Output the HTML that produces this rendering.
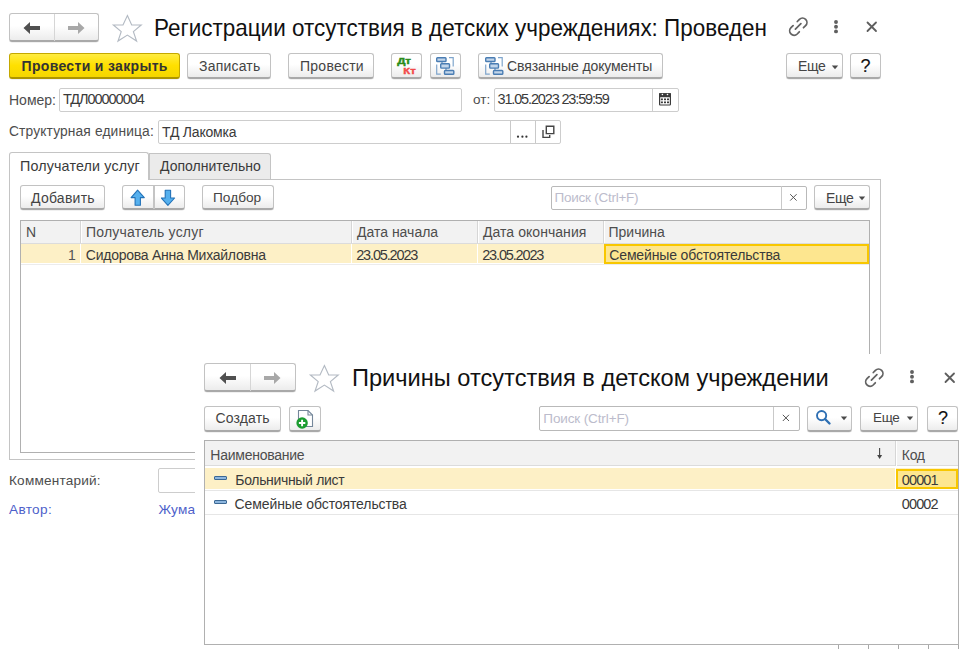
<!DOCTYPE html>
<html><head><meta charset="utf-8">
<style>
*{box-sizing:border-box;margin:0;padding:0}
html,body{width:966px;height:655px;overflow:hidden;background:#fff;font-family:"Liberation Sans",sans-serif;font-size:14px;color:#3a3a3a}
.a{position:absolute}
.t{position:absolute;white-space:nowrap;line-height:1}
.btn{position:absolute;border:1px solid #c2c2c2;border-bottom:2px solid #a9a9a9;border-radius:3px;background:linear-gradient(#fff 0%,#fff 45%,#ececec 100%);box-shadow:0 0.5px 0.5px rgba(0,0,0,.12)}
.yb{position:absolute;border:1px solid #c4a800;border-bottom:2px solid #ad9500;border-radius:3px;background:linear-gradient(#ffec40,#ffe000 50%,#f5d600);box-shadow:0 0.5px 0.5px rgba(0,0,0,.12)}
.inp{position:absolute;border:1px solid #cdcdcd;border-radius:2px;background:#fff}
.lbl{color:#4d4d4d}
.vl{position:absolute;width:1px}
.hd{position:absolute;width:2px;border-left:1px solid #d6d6d6;background:#fff}
.hl{position:absolute;height:1px}
</style></head><body>

<!-- ===== MAIN FORM ===== -->
<!-- nav -->
<div class="btn" style="left:9px;top:13px;width:90px;height:29px"></div>
<div class="vl" style="left:54px;top:14px;height:27px;background:#d6d6d6"></div>
<svg class="a" style="left:23px;top:21px" width="18" height="14" viewBox="0 0 18 14"><path d="M0.5 7 L7 1 L7 5 L17 5 L17 9 L7 9 L7 13 Z" fill="#505050"/></svg>
<svg class="a" style="left:67px;top:21px" width="18" height="14" viewBox="0 0 18 14"><path d="M17.5 7 L11 1 L11 5 L1 5 L1 9 L11 9 L11 13 Z" fill="#a8a8a8"/></svg>
<!-- star -->
<svg class="a" style="left:108px;top:10.5px" width="40" height="34" viewBox="0 0 40 34"><path d="M19.4 4.6 L23.7 14 L33.2 14 L25.4 20.6 L28.6 30.1 L19.4 24.1 L10 30.1 L13.2 20.6 L5.4 14 L15 14 Z" fill="none" stroke="#b3bac3" stroke-width="1.15" stroke-linejoin="miter"/></svg>
<div class="t" style="left:154px;top:16.5px;font-size:23.6px;transform:scaleX(0.952);transform-origin:0 0;color:#111">Регистрации отсутствия в детских учреждениях: Проведен</div>
<!-- link/dots/close -->
<svg class="a" style="left:784px;top:12px" width="28" height="28" viewBox="0 0 28 28"><g fill="none" stroke="#636363" stroke-width="1.75" stroke-linecap="round"><path d="M13.3 9.5 L15.4 7.3 A4.4 4.4 0 0 1 21.6 13.6 L19.5 15.7"/><path d="M15.3 19.8 L13.2 22 A4.4 4.4 0 0 1 7 15.7 L9.1 13.6"/><path d="M11.4 17.1 L16.9 11.7"/></g></svg>
<svg class="a" style="left:831.6px;top:18.8px" width="8" height="16" viewBox="0 0 8 16"><g fill="#606060"><circle cx="4" cy="3" r="1.95"/><circle cx="4" cy="7.7" r="1.95"/><circle cx="4" cy="12.4" r="1.95"/></g></svg>
<svg class="a" style="left:866.3px;top:21.2px" width="12" height="12" viewBox="0 0 12 12"><path d="M1.5 1.5 L10 10 M10 1.5 L1.5 10" stroke="#5e5e5e" stroke-width="1.8" stroke-linecap="round"/></svg>

<!-- toolbar -->
<div class="yb" style="left:9px;top:53px;width:171px;height:26px"></div>
<div class="t" style="left:21.5px;top:59px;font-weight:bold;font-size:14px;letter-spacing:0.33px;color:#333">Провести и закрыть</div>
<div class="btn" style="left:187px;top:53px;width:84px;height:26px"></div>
<div class="t" style="left:199px;top:59px;letter-spacing:0.2px;color:#444">Записать</div>
<div class="btn" style="left:288px;top:53px;width:86px;height:26px"></div>
<div class="t" style="left:300px;top:59px;letter-spacing:0.25px;color:#444">Провести</div>
<div class="btn" style="left:391px;top:53px;width:31px;height:26px"></div>
<svg class="a" style="left:391px;top:53px" width="31" height="26" viewBox="391 53 31 26"><text x="397.2" y="64" font-family="Liberation Sans" font-weight="bold" font-size="9.4" fill="#2b8c18" stroke="#2b8c18" stroke-width="0.5" textLength="13.8" lengthAdjust="spacingAndGlyphs">Дт</text><text x="403.3" y="74.1" font-family="Liberation Sans" font-weight="bold" font-size="9.6" fill="#f24a4a" stroke="#f24a4a" stroke-width="0.4" textLength="12.4" lengthAdjust="spacingAndGlyphs">Кт</text></svg>
<div class="btn" style="left:430px;top:53px;width:31px;height:26px"></div>
<svg class="a" style="left:435.3px;top:56.2px" width="20" height="20" viewBox="-1 -1 20 20"><g fill="#c3d6ea" stroke="#4a7db3" stroke-width="1.4"><rect x="0.7" y="0.7" width="9.3" height="3.8" rx="0.8"/><rect x="4.7" y="6.7" width="8.8" height="4.4" rx="0.8"/><rect x="8.5" y="13.5" width="9.3" height="3.8" rx="0.8"/></g><path d="M6 4.5 V6.7 M10 11.1 V13.5" stroke="#4a7db3" stroke-width="1"/><path d="M13 0.6 H17.2 V9.4 M0.7 7.6 V17.2 H4.8" fill="none" stroke="#7fa5cc" stroke-width="1.2"/></svg>
<div class="btn" style="left:478px;top:53px;width:185px;height:26px"></div>
<svg class="a" style="left:483.6px;top:56.2px" width="20" height="20" viewBox="-1 -1 20 20"><g fill="#c3d6ea" stroke="#4a7db3" stroke-width="1.4"><rect x="0.7" y="0.7" width="9.3" height="3.8" rx="0.8"/><rect x="4.7" y="6.7" width="8.8" height="4.4" rx="0.8"/><rect x="8.5" y="13.5" width="9.3" height="3.8" rx="0.8"/></g><path d="M6 4.5 V6.7 M10 11.1 V13.5" stroke="#4a7db3" stroke-width="1"/><path d="M13 0.6 H17.2 V9.4 M0.7 7.6 V17.2 H4.8" fill="none" stroke="#7fa5cc" stroke-width="1.2"/></svg>
<div class="t" style="left:507px;top:59px;letter-spacing:-0.1px;color:#444">Связанные документы</div>
<div class="btn" style="left:786px;top:53px;width:57px;height:26px"></div>
<div class="t" style="left:798px;top:59px;letter-spacing:-0.4px;color:#444">Еще</div>
<svg class="a" style="left:831px;top:65px" width="8" height="5" viewBox="0 0 8 5"><path d="M0.8 0.6 H7.2 L4 4.2 Z" fill="#4a4a4a"/></svg>
<div class="btn" style="left:850px;top:53px;width:31px;height:26px"></div>
<div class="t" style="left:860.5px;top:57px;font-size:18px;color:#111;-webkit-text-stroke:0.15px #111">?</div>

<!-- fields -->
<div class="t lbl" style="left:9px;top:92.7px;font-size:14px">Номер:</div>
<div class="inp" style="left:59px;top:88px;width:403px;height:24px"></div>
<div class="t" style="left:63px;top:92px;font-size:14.5px;letter-spacing:-1.05px">ТДЛ00000004</div>
<div class="t lbl" style="left:473px;top:93px;font-size:13.5px">от:</div>
<div class="inp" style="left:494px;top:88px;width:185px;height:24px"></div>
<div class="vl" style="left:652px;top:89px;height:22px;background:#cdcdcd"></div>
<div class="t" style="left:497.5px;top:92px;font-size:14.5px;letter-spacing:-1.15px">31.05.2023 23:59:59</div>
<svg class="a" style="left:658px;top:91px" width="14" height="15" viewBox="0 0 14 15"><path d="M1.6 2.8 H12.4 V13.3 Q12.4 14 11.7 14 H2.3 Q1.6 14 1.6 13.3 Z" fill="#fff" stroke="#3a3a3a" stroke-width="1.2"/><rect x="1" y="2.2" width="12" height="4" rx="1" fill="#3a3a3a"/><circle cx="4.4" cy="3.5" r="0.8" fill="#fff"/><circle cx="9.5" cy="3.5" r="0.8" fill="#fff"/><g fill="#3a3a3a"><rect x="2.9" y="7.5" width="2" height="1.7"/><rect x="6" y="7.5" width="2" height="1.7"/><rect x="9" y="7.5" width="2" height="1.7"/><rect x="2.9" y="10.5" width="2" height="1.7"/><rect x="6" y="10.5" width="2" height="1.7"/><rect x="9" y="10.5" width="2" height="1.7"/></g></svg>

<div class="t lbl" style="left:9px;top:125px;font-size:13.8px;letter-spacing:0.13px">Структурная единица:</div>
<div class="inp" style="left:158px;top:120px;width:403px;height:24px"></div>
<div class="vl" style="left:510px;top:121px;height:22px;background:#c9c9c9"></div>
<div class="vl" style="left:535px;top:121px;height:22px;background:#c9c9c9"></div>
<div class="t" style="left:162px;top:125px;letter-spacing:-0.2px">ТД Лакомка</div>
<svg class="a" style="left:516px;top:134px" width="12" height="5" viewBox="0 0 12 5"><g fill="#333"><circle cx="2" cy="2.7" r="1.1"/><circle cx="6.4" cy="2.7" r="1.1"/><circle cx="10.4" cy="2.7" r="1.1"/></g></svg>
<svg class="a" style="left:540px;top:124px" width="16" height="16" viewBox="0 0 16 16"><path d="M6.3 2.2 H13.8 V9.6 H6.3 Z" fill="none" stroke="#444" stroke-width="1.4"/><path d="M3 5.9 V13.4 H9.7 V10.9" fill="none" stroke="#444" stroke-width="1.4"/></svg>

<!-- tabs -->
<div class="a" style="left:9px;top:179px;width:872px;height:281px;border:1px solid #c4c4c4;"></div>
<div class="a" style="left:9px;top:152px;width:140px;height:28px;border:1px solid #c4c4c4;border-bottom:none;background:#fff;border-radius:3px 3px 0 0"></div>
<div class="a" style="left:149px;top:153px;width:122px;height:26px;border:1px solid #c4c4c4;border-bottom:none;background:#ebebeb;border-radius:0 3px 0 0"></div>
<div class="t" style="left:20px;top:158.5px;font-size:14.3px;letter-spacing:0.15px">Получатели услуг</div>
<div class="t" style="left:160px;top:159px">Дополнительно</div>

<div class="btn" style="left:20px;top:185px;width:85px;height:25px"></div>
<div class="t" style="left:31px;top:190.5px;letter-spacing:0.25px;color:#444">Добавить</div>
<div class="btn" style="left:122px;top:185px;width:63px;height:25px"></div>
<div class="vl" style="left:153px;top:186px;height:23px;width:1.5px;background:#c4c4c4"></div>
<svg class="a" style="left:130px;top:188px" width="16" height="19" viewBox="0 0 16 19"><path d="M7.6 2.2 L14.3 9.6 L10.4 9.6 L10.4 17.2 L5.1 17.2 L5.1 9.6 L1.1 9.6 Z" fill="#55b0ee" stroke="#2272b8" stroke-width="1.1" stroke-linejoin="round"/></svg>
<svg class="a" style="left:161px;top:188px" width="16" height="19" viewBox="0 0 16 19"><path d="M4.2 2.3 H9.6 V10 H13.6 L6.9 17.3 L0.4 10 H4.2 Z" fill="#55b0ee" stroke="#2272b8" stroke-width="1.1" stroke-linejoin="round"/></svg>
<div class="btn" style="left:202px;top:185px;width:72px;height:25px"></div>
<div class="t" style="left:213px;top:190.5px;font-size:13.7px;color:#444">Подбор</div>

<div class="inp" style="left:551px;top:186px;width:256px;height:24px;border-color:#b9b9b9"></div>
<div class="vl" style="left:781px;top:186px;height:23px;background:#c9c9c9"></div>
<div class="t" style="left:554.5px;top:190.5px;font-size:13.5px;letter-spacing:-0.25px;color:#bcbccc">Поиск (Ctrl+F)</div>
<svg class="a" style="left:789px;top:193px" width="9" height="9" viewBox="0 0 9 9"><path d="M1.2 1.2 L7.6 7.6 M7.6 1.2 L1.2 7.6" stroke="#555" stroke-width="1"/></svg>
<div class="btn" style="left:814px;top:185px;width:56px;height:25px"></div>
<div class="t" style="left:826px;top:190.5px;letter-spacing:-0.4px;color:#444">Еще</div>
<svg class="a" style="left:858px;top:196px" width="8" height="5" viewBox="0 0 8 5"><path d="M0.8 0.6 H7.2 L4 4.2 Z" fill="#4a4a4a"/></svg>

<!-- table -->
<div class="a" style="left:20px;top:220px;width:850px;height:233px;border:1px solid #b0b0b0"></div>
<div class="a" style="left:21px;top:221px;width:848px;height:23px;background:#f2f2f2;border-bottom:1px solid #dcdcdc"></div>
<div class="hd" style="left:80px;top:221px;height:22px"></div>
<div class="hd" style="left:351px;top:221px;height:22px"></div>
<div class="hd" style="left:477px;top:221px;height:22px"></div>
<div class="hd" style="left:603px;top:221px;height:22px"></div>
<div class="t" style="left:26px;top:225px;font-size:14px;color:#4d4d4d">N</div>
<div class="t" style="left:86px;top:225px;font-size:14px;letter-spacing:0.2px;color:#4d4d4d">Получатель услуг</div>
<div class="t" style="left:357px;top:225px;font-size:14px;color:#4d4d4d">Дата начала</div>
<div class="t" style="left:483px;top:225px;font-size:14px;letter-spacing:0.05px;color:#4d4d4d">Дата окончания</div>
<div class="t" style="left:608.5px;top:225px;font-size:14px;color:#4d4d4d">Причина</div>
<div class="a" style="left:21px;top:244px;width:848px;height:19px;background:#fdf0c6"></div>
<div class="vl" style="left:80px;top:244px;height:19px;background:#fff"></div>
<div class="vl" style="left:351px;top:244px;height:19px;background:#fff"></div>
<div class="vl" style="left:477px;top:244px;height:19px;background:#fff"></div>
<div class="hl" style="left:21px;top:264px;width:848px;background:#ececec"></div>
<div class="a" style="left:604px;top:244px;width:265px;height:19.5px;background:#fde68f;border:2px solid #f8c700"></div>
<div class="t" style="left:68px;top:248.3px;font-size:14px;color:#555">1</div>
<div class="t" style="left:85.8px;top:248.3px;font-size:14px;letter-spacing:-0.25px">Сидорова Анна Михайловна</div>
<div class="t" style="left:356.2px;top:248px;font-size:14.5px;letter-spacing:-1.15px">23.05.2023</div>
<div class="t" style="left:482.2px;top:248px;font-size:14.5px;letter-spacing:-1.15px">23.05.2023</div>
<div class="t" style="left:609.3px;top:248.3px;font-size:14px;letter-spacing:-0.15px">Семейные обстоятельства</div>

<!-- comment / author -->
<div class="t lbl" style="left:9px;top:474px;font-size:13.6px;letter-spacing:0.2px">Комментарий:</div>
<div class="inp" style="left:158px;top:468px;width:100px;height:25px"></div>
<div class="t" style="left:9px;top:503px;font-size:13.6px;letter-spacing:0.35px;color:#4e5fca">Автор:</div>
<div class="t" style="left:158.5px;top:503px;font-size:13.6px;letter-spacing:0.2px;color:#4e5fca">Жумабаева</div>

<!-- ===== POPUP ===== -->
<div class="a" style="left:195px;top:354px;width:771px;height:301px;background:#fff"></div>
<div class="btn" style="left:204px;top:363px;width:92px;height:29px"></div>
<div class="vl" style="left:250px;top:364px;height:27px;background:#d6d6d6"></div>
<svg class="a" style="left:219px;top:371px" width="18" height="14" viewBox="0 0 18 14"><path d="M0.5 7 L7 1 L7 5 L17 5 L17 9 L7 9 L7 13 Z" fill="#505050"/></svg>
<svg class="a" style="left:263px;top:371px" width="18" height="14" viewBox="0 0 18 14"><path d="M17.5 7 L11 1 L11 5 L1 5 L1 9 L11 9 L11 13 Z" fill="#a8a8a8"/></svg>
<svg class="a" style="left:305.1px;top:360.8px" width="40" height="34" viewBox="0 0 40 34"><path d="M19.4 4.6 L23.7 14 L33.2 14 L25.4 20.6 L28.6 30.1 L19.4 24.1 L10 30.1 L13.2 20.6 L5.4 14 L15 14 Z" fill="none" stroke="#b3bac3" stroke-width="1.15" stroke-linejoin="miter"/></svg>
<div class="t" style="left:352px;top:366px;font-size:24.4px;transform:scaleX(0.968);transform-origin:0 0;color:#111">Причины отсутствия в детском учреждении</div>
<svg class="a" style="left:860.4px;top:362.5px" width="28" height="28" viewBox="0 0 28 28"><g fill="none" stroke="#636363" stroke-width="1.75" stroke-linecap="round"><path d="M13.3 9.5 L15.4 7.3 A4.4 4.4 0 0 1 21.6 13.6 L19.5 15.7"/><path d="M15.3 19.8 L13.2 22 A4.4 4.4 0 0 1 7 15.7 L9.1 13.6"/><path d="M11.4 17.1 L16.9 11.7"/></g></svg>
<svg class="a" style="left:907.8px;top:368.8px" width="8" height="16" viewBox="0 0 8 16"><g fill="#606060"><circle cx="4" cy="3" r="1.95"/><circle cx="4" cy="7.7" r="1.95"/><circle cx="4" cy="12.4" r="1.95"/></g></svg>
<svg class="a" style="left:943.6px;top:371.5px" width="12" height="12" viewBox="0 0 12 12"><path d="M1.5 1.5 L10 10 M10 1.5 L1.5 10" stroke="#5e5e5e" stroke-width="1.8" stroke-linecap="round"/></svg>

<div class="btn" style="left:204px;top:405.5px;width:77px;height:26px"></div>
<div class="t" style="left:215.5px;top:411px;font-size:14px;letter-spacing:0.15px;color:#444">Создать</div>
<div class="btn" style="left:289px;top:405.5px;width:32px;height:26px"></div>
<svg class="a" style="left:295px;top:409px" width="20" height="20" viewBox="0 0 20 20"><path d="M3.5 1.5 H13 L17.5 6 V17.5 H3.5 Z" fill="#fff" stroke="#75879a" stroke-width="1.1"/><path d="M13 1.5 V6 H17.5" fill="none" stroke="#75879a" stroke-width="1.1"/><circle cx="7.1" cy="14" r="5.7" fill="#1b9c30"/><path d="M7.1 10.8 V17.2 M3.9 14 H10.3" stroke="#fff" stroke-width="1.9"/></svg>

<div class="inp" style="left:539px;top:406px;width:261px;height:25px;border-color:#b9b9b9"></div>
<div class="vl" style="left:773px;top:407px;height:23px;background:#c9c9c9"></div>
<div class="t" style="left:543.3px;top:411.5px;font-size:13.5px;letter-spacing:-0.12px;color:#bcbccc">Поиск (Ctrl+F)</div>
<svg class="a" style="left:782px;top:414px" width="8" height="8" viewBox="0 0 8 8"><path d="M0.8 0.8 L7 7 M7 0.8 L0.8 7" stroke="#555" stroke-width="1"/></svg>
<div class="btn" style="left:807px;top:405.5px;width:45px;height:26px"></div>
<svg class="a" style="left:815px;top:409px" width="17" height="17" viewBox="0 0 17 17"><circle cx="6.6" cy="6.6" r="4.6" fill="none" stroke="#2e6fb3" stroke-width="1.9"/><path d="M10 10 L14.5 14.5" stroke="#2e6fb3" stroke-width="2.4" stroke-linecap="round"/></svg>
<svg class="a" style="left:839.5px;top:416px" width="8" height="5" viewBox="0 0 8 5"><path d="M0.8 0.6 H7.2 L4 4.2 Z" fill="#4a4a4a"/></svg>
<div class="btn" style="left:860px;top:405.5px;width:58px;height:26px"></div>
<div class="t" style="left:873px;top:411px;font-size:13.5px;letter-spacing:-0.3px;color:#444">Еще</div>
<svg class="a" style="left:905.5px;top:416px" width="8" height="5" viewBox="0 0 8 5"><path d="M0.8 0.6 H7.2 L4 4.2 Z" fill="#4a4a4a"/></svg>
<div class="btn" style="left:927px;top:405.5px;width:31px;height:26px"></div>
<div class="t" style="left:938px;top:409px;font-size:18px;color:#111;-webkit-text-stroke:0.15px #111">?</div>

<div class="a" style="left:204px;top:440px;width:755px;height:205px;border:1px solid #b0b0b0"></div>
<div class="a" style="left:205px;top:441px;width:753px;height:25px;background:#f2f2f2;border-bottom:1px solid #dcdcdc"></div>
<div class="hd" style="left:895px;top:441px;height:25px"></div>
<div class="t" style="left:210.3px;top:447.5px;font-size:14px;letter-spacing:-0.25px;color:#4d4d4d">Наименование</div>
<svg class="a" style="left:875px;top:447px" width="10" height="14" viewBox="0 0 10 14"><path d="M4.6 1 V9" stroke="#444" stroke-width="1.1"/><path d="M2.1 8 H7.1 L4.6 12 Z" fill="#444"/></svg>
<div class="t" style="left:901.8px;top:447.5px;font-size:14px;letter-spacing:-0.3px;color:#4d4d4d">Код</div>
<div class="a" style="left:205px;top:468px;width:753px;height:21px;background:#fdf0c6"></div>
<div class="vl" style="left:895px;top:468px;height:21px;background:#fff"></div>
<div class="a" style="left:896px;top:469px;width:62px;height:20px;background:#fde68f;border:2px solid #f8c700"></div>
<div class="hl" style="left:205px;top:490px;width:753px;background:#e6e6e6"></div>
<div class="hl" style="left:205px;top:514px;width:753px;background:#e6e6e6"></div>
<div class="a" style="left:214px;top:475.5px;width:12.5px;height:4.5px;background:#8db6de;border:1.2px solid #3b6894;border-radius:1px"></div>
<div class="a" style="left:214px;top:499.5px;width:12.5px;height:4.5px;background:#8db6de;border:1.2px solid #3b6894;border-radius:1px"></div>
<div class="t" style="left:235.3px;top:473px;font-size:14px;letter-spacing:-0.33px">Больничный лист</div>
<div class="t" style="left:234.6px;top:497.3px;font-size:14px;letter-spacing:-0.1px">Семейные обстоятельства</div>
<div class="t" style="left:901.8px;top:472.6px;font-size:14.5px;letter-spacing:-0.9px">00001</div>
<div class="t" style="left:901.8px;top:496.9px;font-size:14.5px;letter-spacing:-0.9px">00002</div>
<div class="vl" style="left:838px;top:645px;height:4px;background:#a8a8a8"></div>
<div class="vl" style="left:868px;top:645px;height:4px;background:#a8a8a8"></div>
<div class="vl" style="left:898px;top:645px;height:4px;background:#a8a8a8"></div>
<div class="vl" style="left:928px;top:645px;height:4px;background:#a8a8a8"></div>
<div class="vl" style="left:958px;top:645px;height:4px;background:#a8a8a8"></div>

</body></html>
